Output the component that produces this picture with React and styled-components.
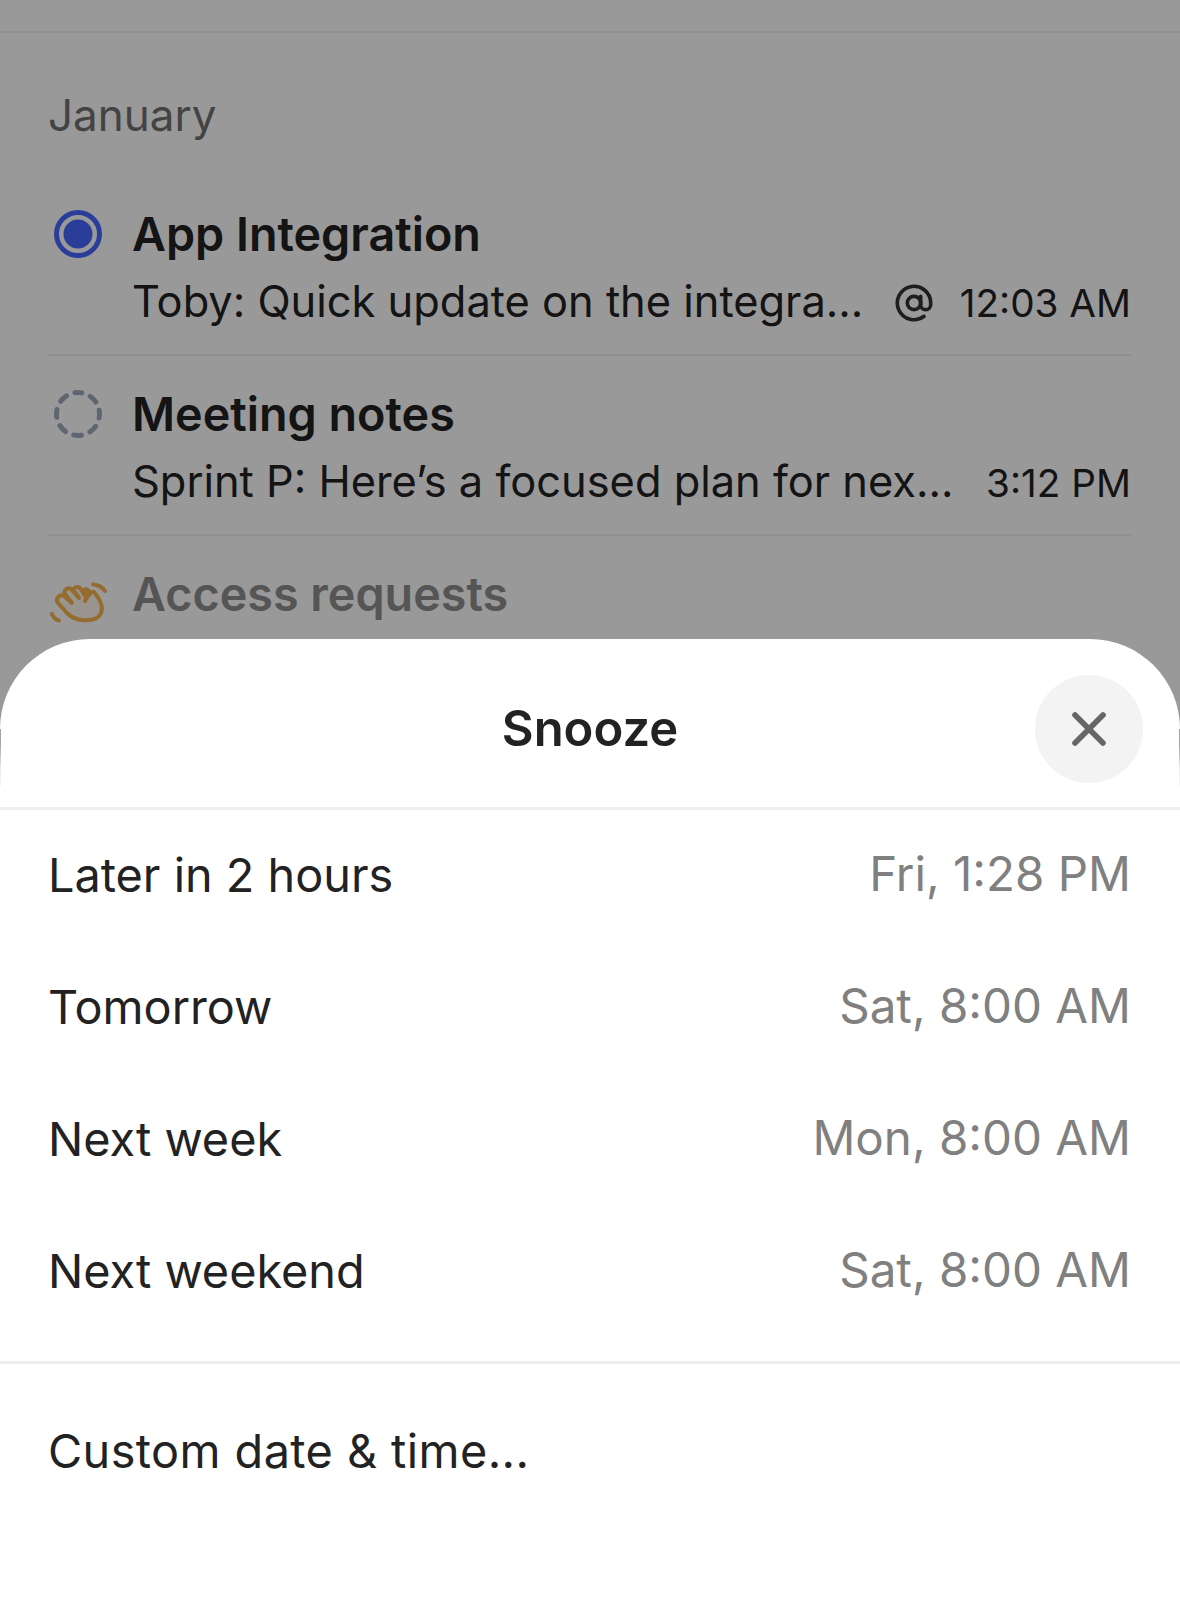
import React from "react";
import styled, { createGlobalStyle } from "styled-components";
import { AtSign, X } from "lucide-react";

const GlobalStyle = createGlobalStyle`
  html, body {
    margin: 0;
    padding: 0;
    background: #fff;
  }
  body {
    font-family: Inter, "Noto Sans", sans-serif;
    -webkit-font-smoothing: antialiased;
  }
`;

const Page = styled.div`
  position: relative;
  width: 1180px;
  height: 1620px;
  overflow: hidden;
`;

const Inbox = styled.div`
  padding-top: 31px;
`;

const TopRule = styled.div`
  height: 2px;
  background: #eee;
`;

const MonthLabel = styled.div`
  margin: 59px 49px 0 48px;
  height: 46px;
  line-height: 46px;
  font-size: 44px;
  color: #717171;
`;

const List = styled.div`
  margin: 38px 49px 0 48px;
`;

const Thread = styled.div`
  display: flex;
  height: 180px;
  padding-top: 30px;
  box-sizing: border-box;
  border-bottom: ${(p) => (p.$last ? "none" : "2px solid #f1f1f1")};
`;

const IconSlot = styled.div`
  flex: 0 0 84px;
  height: 56px;
  display: flex;
  align-items: center;
  padding-left: 6px;
  box-sizing: border-box;
`;

const ThreadBody = styled.div`
  flex: 1;
  min-width: 0;
`;

const ThreadTitle = styled.div`
  height: 56px;
  line-height: 56px;
  font-size: 46.7px;
  font-weight: 600;
  color: ${(p) => (p.$muted ? "#8e8e8e" : "#222")};
`;

const ThreadMeta = styled.div`
  display: flex;
  align-items: center;
  height: 56px;
  margin-top: 11px;
  color: #222;
`;

const Preview = styled.span`
  flex: 1;
  min-width: 0;
  font-size: 43.4px;
  white-space: nowrap;
`;

const Mention = styled(AtSign)`
  margin: 3px 26px 0 0;
  color: #333;
`;

const Time = styled.span`
  margin-top: 4px;
  font-size: 38.7px;
`;

const HandIcon = styled.svg`
  flex: none;
  margin: 16px 0 0 -6px;
`;

const Scrim = styled.div`
  position: absolute;
  inset: 0;
  background: rgba(0, 0, 0, 0.4);
`;

const Sheet = styled.div`
  position: absolute;
  left: 0;
  right: 0;
  top: 639px;
  bottom: 0;
  background: #fff;
  border-radius: 90px 90px 0 0;

  &::before,
  &::after {
    content: "";
    position: absolute;
    top: 90px;
    width: 1px;
    height: 57px;
    background: linear-gradient(#a0a0a0, #a8a8a8 30%, #ececec 70%, #f4f4f4);
  }
  &::before {
    left: 0;
  }
  &::after {
    right: 0;
  }
`;

const SheetHeader = styled.div`
  position: relative;
  height: 158px;
  padding-top: 10px;
  display: flex;
  align-items: center;
  justify-content: center;
  border-bottom: 3px solid #efefef;
`;

const SheetTitle = styled.div`
  font-size: 49px;
  font-weight: 600;
  color: #222;
`;

const CloseButton = styled.button`
  position: absolute;
  right: 37px;
  top: 36px;
  width: 108px;
  height: 108px;
  border: none;
  border-radius: 50%;
  padding: 0;
  background: #f3f3f3;
  color: #666;
  display: flex;
  align-items: center;
  justify-content: center;
`;

const Options = styled.div`
  padding: 0 49px 23px 48px;
  border-bottom: 3px solid #efefef;
`;

const CustomOptions = styled.div`
  padding: 22px 49px 0 48px;
`;

const Option = styled.div`
  display: flex;
  align-items: center;
  justify-content: space-between;
  height: 132px;
`;

const OptionLabel = styled.span`
  margin-bottom: 2px;
  font-size: 46.8px;
  color: #222;
  letter-spacing: ${(p) => (p.$wide ? "0.42px" : "0")};
`;

const OptionTime = styled.span`
  font-size: 47.5px;
  margin-bottom: 6px;
  color: #808080;
`;

const UnreadDot = () => (
  <svg width="48" height="48" viewBox="0 0 48 48">
    <circle cx="24" cy="24" r="21.5" fill="none" stroke="#4767ff" strokeWidth="5" />
    <circle cx="24" cy="24" r="14.5" fill="#4767ff" />
  </svg>
);

const DraftRing = () => (
  <svg width="48" height="48" viewBox="0 0 48 48">
    <circle
      cx="24"
      cy="24"
      r="21.5"
      fill="none"
      stroke="#9eaabe"
      strokeWidth="5"
      strokeLinecap="round"
      strokeDasharray="8 8.88"
      strokeDashoffset="4"
      transform="rotate(-90 24 24)"
    />
  </svg>
);

const WavingHand = () => (
  <HandIcon width="60" height="45" viewBox="0 0 60 45" fill="none" stroke="#f7b54c" strokeWidth="4" strokeLinecap="round" strokeLinejoin="round">
    <path
      fill="#fff1dc"
      fillOpacity="0.5"
      d="M40 40C32 41 24 38 19 33L10 23C7 19 12 13 16 16L24 23L17 14C15 10 20 7 23 9L31 18L26 11C25 7 29 6 32 8L38 17L36 12C36 9 39 8 41 11L37 21C39 17 43 11 46 12C51 18 56 26 53 33C51 38 46 40 40 40Z"
    />
    <path d="M45 4.500C50 5 55 8 57 11" />
    <path d="M4 34C5 37 8 40 11 40.500" />
  </HandIcon>
);

const threads = [
  { id: 1, icon: <UnreadDot />, title: "App Integration", preview: "Toby: Quick update on the integra...", mention: true, time: "12:03 AM" },
  { id: 2, icon: <DraftRing />, title: "Meeting notes", preview: "Sprint P: Here’s a focused plan for nex...", time: "3:12 PM" },
];

const snoozeOptions = [
  { label: "Later in 2 hours", time: "Fri, 1:28 PM" },
  { label: "Tomorrow", time: "Sat, 8:00 AM" },
  { label: "Next week", time: "Mon, 8:00 AM" },
  { label: "Next weekend", time: "Sat, 8:00 AM" },
];

export default function App() {
  return (
    <Page>
      <GlobalStyle />
      <Inbox>
        <TopRule />
        <MonthLabel>January</MonthLabel>
        <List>
          {threads.map((t) => (
            <Thread key={t.id}>
              <IconSlot>{t.icon}</IconSlot>
              <ThreadBody>
                <ThreadTitle>{t.title}</ThreadTitle>
                <ThreadMeta>
                  <Preview>{t.preview}</Preview>
                  {t.mention && <Mention size={40} strokeWidth={2.2} />}
                  <Time>{t.time}</Time>
                </ThreadMeta>
              </ThreadBody>
            </Thread>
          ))}
          <Thread $last>
            <IconSlot>
              <WavingHand />
            </IconSlot>
            <ThreadBody>
              <ThreadTitle $muted>Access requests</ThreadTitle>
            </ThreadBody>
          </Thread>
        </List>
      </Inbox>
      <Scrim />
      <Sheet>
        <SheetHeader>
          <SheetTitle>Snooze</SheetTitle>
          <CloseButton>
            <X size={56} strokeWidth={2.4} />
          </CloseButton>
        </SheetHeader>
        <Options>
          {snoozeOptions.map((o) => (
            <Option key={o.label}>
              <OptionLabel>{o.label}</OptionLabel>
              <OptionTime>{o.time}</OptionTime>
            </Option>
          ))}
        </Options>
        <CustomOptions>
          <Option>
            <OptionLabel $wide>Custom date &amp; time...</OptionLabel>
          </Option>
        </CustomOptions>
      </Sheet>
    </Page>
  );
}
